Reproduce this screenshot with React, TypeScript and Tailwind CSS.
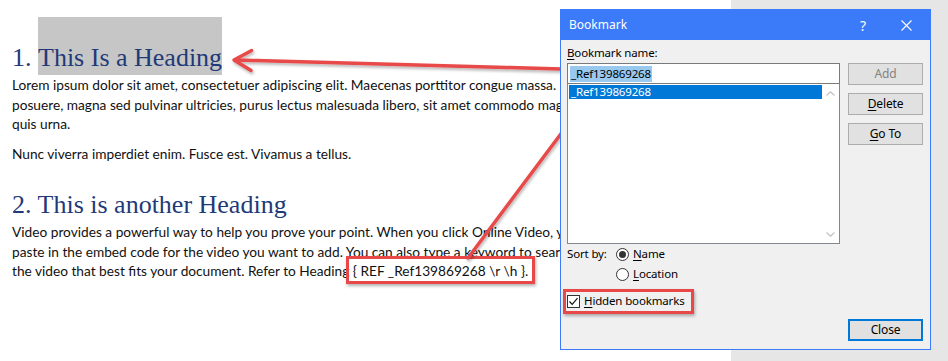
import React from 'react';

const doc = { fontFamily: 'Lato, "Liberation Sans", sans-serif' };
const serif = { fontFamily: '"Liberation Serif", "DejaVu Serif", serif' };
const ui = { fontFamily: '"Noto Sans", "Open Sans", sans-serif' };

const Btn: React.FC<{ children: React.ReactNode; disabled?: boolean; focused?: boolean }> = ({ children, disabled, focused }) => (
  <div
    className={
      'h-[22px] w-[75px] flex items-center justify-center bg-[#e1e1e1] ' +
      (focused ? 'border-2 border-[#0078d7] ' : 'border border-[#adadad] ') +
      (disabled ? 'text-[#838383]' : 'text-black')
    }
  >
    {children}
  </div>
);

const Radio: React.FC<{ checked?: boolean }> = ({ checked }) => (
  <span className="w-[13px] h-[13px] rounded-full border border-[#333] bg-white flex items-center justify-center">
    {checked && <span className="w-[7px] h-[7px] rounded-full bg-[#333]" />}
  </span>
);

function BookmarkDialog() {
  return (
    <div className="absolute left-[560px] top-[9px] w-[371px] h-[341px] border border-[#3b7af8] bg-[#f0f0f0] flex flex-col" style={ui}>
      {/* title bar */}
      <div className="h-[30px] bg-[#3b7af8] flex items-center text-white text-[12px] pl-[8px]">
        <span>Bookmark</span>
        <span className="ml-auto mr-[35px] text-[14px]">?</span>
        <svg width="11" height="11" viewBox="0 0 11 11" className="mr-[18px]">
          <path d="M0.5 0.5 L10.5 10.5 M10.5 0.5 L0.5 10.5" stroke="white" strokeWidth="1.1" />
        </svg>
      </div>

      {/* body */}
      <div className="flex-1 flex pl-[6px] pr-[6px] pb-[8px] text-[11.5px] tracking-[-0.15px] text-black">
        <div className="w-[273px] flex flex-col pt-[5px]">
          <div className="h-[16px] leading-[16px]">
            <span className="underline underline-offset-2">B</span>ookmark name:
          </div>
          <div className="mt-[2px] h-[21px] border border-[#7a7a7a] bg-white flex items-center pl-[2px]">
            <span className="bg-[#99c9ef] leading-[16px] px-px">_Ref139869268</span>
          </div>
          <div className="h-[160px] border border-t-0 border-[#828790] bg-white flex">
            <div className="flex-1 pl-px pt-px">
              <div className="h-[14px] leading-[14px] bg-[#0078d7] text-white pl-[2px]">_Ref139869268</div>
            </div>
            <div className="w-[17px] flex flex-col items-center justify-between pt-[7px] pb-[6px]">
              <svg width="9" height="5" viewBox="0 0 9 5">
                <path d="M0.5 4.5 L4.5 0.8 L8.5 4.5" fill="none" stroke="#c2c2c2" strokeWidth="1.2" />
              </svg>
              <svg width="9" height="5" viewBox="0 0 9 5">
                <path d="M0.5 0.5 L4.5 4.2 L8.5 0.5" fill="none" stroke="#c2c2c2" strokeWidth="1.2" />
              </svg>
            </div>
          </div>
          <div className="flex">
            <div className="w-[49px] h-[20px] flex items-center">Sort by:</div>
            <div className="flex flex-col">
              <div className="h-[20px] flex items-center gap-[4px]">
                <Radio checked />
                <span><span className="underline underline-offset-2">N</span>ame</span>
              </div>
              <div className="h-[20px] flex items-center gap-[4px]">
                <Radio />
                <span><span className="underline underline-offset-2">L</span>ocation</span>
              </div>
            </div>
          </div>
          <div className="relative mt-[7px] h-[20px] flex items-center gap-[4px] self-start">
            <span className="w-[13px] h-[13px] border border-[#333] bg-white flex items-center justify-center">
              <svg width="11" height="11" viewBox="0 0 11 11">
                <path d="M1.5 5.5 L4.2 8.3 L9.5 2.2" fill="none" stroke="#111" strokeWidth="1.2" />
              </svg>
            </span>
            <span><span className="underline underline-offset-2">H</span>idden bookmarks</span>
            <span className="absolute -left-[4px] -right-[9px] -top-[2px] -bottom-[3px] border-[3px] border-[#e84848] shadow-[1px_2px_3px_rgba(0,0,0,0.3)]" />
          </div>
        </div>

        <div className="ml-[8px] flex flex-col gap-[8px] pt-[23px] text-[12px]">
          <Btn disabled>Add</Btn>
          <Btn>
            <span><span className="underline underline-offset-2">D</span>elete</span>
          </Btn>
          <Btn>
            <span><span className="underline underline-offset-2">G</span>o To</span>
          </Btn>
          <div className="mt-auto">
            <Btn focused>Close</Btn>
          </div>
        </div>
      </div>
    </div>
  );
}

function Arrows() {
  return (
    <svg className="absolute inset-0 pointer-events-none" width="948" height="361" viewBox="0 0 948 361">
      <defs>
        <filter id="sh" x="-10%" y="-10%" width="120%" height="120%">
          <feDropShadow dx="1" dy="2" stdDeviation="1.5" floodColor="#000" floodOpacity="0.3" />
        </filter>
      </defs>
      <g stroke="#e84848" strokeWidth="3.5" strokeLinecap="round" strokeLinejoin="round" fill="none" filter="url(#sh)">
        <path d="M561 69 L236 60" />
        <path d="M251 70.5 L234 60 L251.6 50.5" />
        <path d="M468 258 L587 99" />
        <path d="M569.6 104.8 L588 97 L585.5 116.8" />
      </g>
    </svg>
  );
}

export default function App() {
  return (
    <div className="relative w-[948px] h-[361px] flex overflow-hidden bg-[#e6e6e6]">
      {/* document page, partly covered by the dialog */}
      <div className="w-[731px] h-full bg-white pl-[12px] pt-[17px] text-[#111] whitespace-nowrap" style={doc}>
        <div className="h-[58px] flex items-end text-[26px] leading-[34px] text-[#1f3a78]" style={serif}>
          <span>1.&nbsp;</span>
          <span className="self-stretch flex items-end bg-[#c6c6c6]">This Is a Heading</span>
        </div>
        <p className="text-[13.7px] leading-[19.7px]">
          Lorem ipsum dolor sit amet, consectetuer adipiscing elit. Maecenas porttitor congue massa. Fusce
          <br />
          posuere, magna sed pulvinar ultricies, purus lectus malesuada libero, sit amet commodo magna eros
          <br />
          quis urna.
        </p>
        <p className="mt-[10px] text-[13.7px] leading-[19.7px]">Nunc viverra imperdiet enim. Fusce est. Vivamus a tellus.</p>
        <div className="h-[58px] flex items-end text-[26px] leading-[34px] text-[#1f3a78]" style={serif}>
          2. This is another Heading
        </div>
        <p className="text-[13.7px] leading-[19.7px]">
          Video provides a powerful way to help you prove your point. When you click Online Video, you can
          <br />
          paste in the embed code for the video you want to add. You can also type a keyword to search online for
          <br />
          the video that best fits your document. Refer to Heading{' '}
          <span className="relative">
            {'{ REF _Ref139869268 \\r \\h }.'}
            <span className="absolute -left-[7px] -right-[7px] -top-[6px] -bottom-[5px] border-[3px] border-[#e84848] shadow-[1px_2px_3px_rgba(0,0,0,0.3)]" />
          </span>
        </p>
      </div>
      <div className="flex-1" />
      <Arrows />
      <BookmarkDialog />
    </div>
  );
}
